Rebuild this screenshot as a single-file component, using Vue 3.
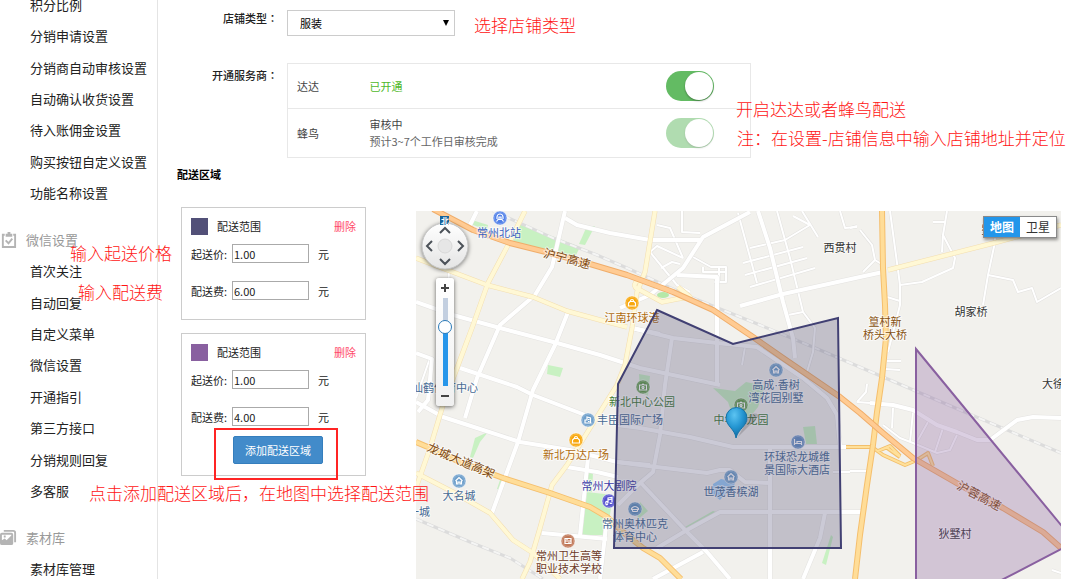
<script setup>
import { ref } from 'vue'

const groups = [
  { title: '', icon: '', items: ['积分比例', '分销申请设置', '分销商自动审核设置', '自动确认收货设置', '待入账佣金设置', '购买按钮自定义设置', '功能名称设置'] },
  { title: '微信设置', icon: 'clip', items: ['首次关注', '自动回复', '自定义菜单', '微信设置', '开通指引', '第三方接口', '分销规则回复', '多客服'] },
  { title: '素材库', icon: 'album', items: ['素材库管理'] }
]

const shopType = ref('服装')
const dada = ref(true)
const fengniao = ref(true)
const zoomLevel = ref(70)
const zones = ref([
  { id: 'a', color: '#525078', start: '1.00', fee: '6.00' },
  { id: 'b', color: '#8960a0', start: '1.00', fee: '4.00' }
])

const notes = [
  { cls: 'n-type', text: '选择店铺类型' },
  { cls: 'n-open', text: '开启达达或者蜂鸟配送' },
  { cls: 'n-tip', text: '注：在设置-店铺信息中输入店铺地址并定位' },
  { cls: 'n-start', text: '输入起送价格' },
  { cls: 'n-fee', text: '输入配送费' },
  { cls: 'n-add', text: '点击添加配送区域后，在地图中选择配送范围' }
]

const greens = [
  '472,220 488,225 487,230 473,225',
  '518,223 580,247 575,257 513,242',
  '587,226 595,226 585,245 579,244',
  '548,365 563,368 560,377 547,374',
  '470,457 475,438 488,432 480,442 473,458',
  '500,480 506,482 501,490 497,489',
  '587,492 613,495 607,535 582,535',
  '588,473 593,473 592,492 587,492',
  '713,388 735,391 746,382 765,386 758,407 750,417 733,417 728,402',
  '803,427 815,426 817,444 806,444',
  '685,527 713,511 716,512 687,528',
  '831,535 833,537 826,565 822,563',
  '640,502 648,511 637,520',
  '639,374 650,376 648,396 640,392'
]

const thin = [
  'M657 225L670 228L683 258', 'M682 211V232L700 233', 'M650 252L663 268L677 285L690 292', 'M650 252L657 246L683 258M661 268L672 262L680 264',
  'M693 257L711 267H726V282H714M703 267V272H726M719 267V282', 'M738 213L757 283', 'M750 248L785 240L810 225L793 216',
  'M743 263L803 247', 'M745 275L807 258', 'M750 287L815 268', 'M802 211L818 237', 'M840 211L845 228L857 227',
  'M777 211L790 258L803 312L815 328L813 352L807 372', 'M788 315L803 312', 'M745 347L742 365',
  'M890 211L900 285V305L888 352', 'M900 285L922 282L953 268L955 258L943 235L947 211', 'M942 252L943 235M933 222H945',
  'M995 230V242L988 275L983 305', 'M988 275L1013 280L1018 292L1032 288L1037 302L1061 288', 'M860 230L872 245L875 260L883 265M863 272L875 260', 'M850 228L857 226',
  'M887 361H901M885 369L900 370M887 297L900 301', 'M857 402L866 392L867 384M857 402L870 403', 'M893 408L892 428', 'M913 412L910 442', 'M883 425L900 438L913 443L937 453L950 450L957 435', 'M928 422L918 440M943 428L935 452',
  'M850 471H867M833 472H850', 'M430 358L416 398', 'M449 270L446 330', 'M1052 570L1061 573'
]

const white = [
  'M565 211L552 267L535 295L500 325L477 378L465 418',
  'M416 302L453 315L500 328L557 343L600 355L640 368L720 385',
  'M568 312L555 345L533 390L518 442L492 513',
  'M416 353L432 359L428 400L418 412', 'M460 368L517 387L533 395L585 415',
  'M416 402L443 417L477 428L520 442L570 450L617 462L650 465',
  'M565 218L577 225L610 233L650 240H700', 'M477 211L470 225',
  'M567 467L597 472L618 477', 'M588 458L580 535', 'M542 533L607 539', 'M607 518L600 579', 'M632 328L660 334',
  'M750 212L703 237L683 268L650 295L620 308', 'M677 275L717 277V385',
  'M632 328L673 338L717 343L757 347L803 378L827 398L837 415L840 447',
  'M672 338L665 385L660 435L653 472L640 483L618 505',
  'M758 211L770 248L783 302L793 338L795 358',
  'M740 306L783 294L860 277L883 272',
  'M617 425L640 428L690 437L733 447H850',
  'M617 462L640 465L707 473L720 470H730L745 482L770 483', 'M770 448V579',
  'M657 548L687 530L720 512H862', 'M640 482L687 532L707 552L730 579', 'M703 552L653 579', 'M825 513L820 538L803 579',
  'M870 403L893 405L913 410L937 425L957 432L977 440H990L1017 420L1033 417L1061 418'
]

const cream = [
  'M416 258L487 285L533 297L567 311L600 320L627 327',
  'M525 211L507 247L488 283L472 328L457 368L443 405L430 448L417 485',
  'M655 211L645 272L637 292L632 328L625 365L617 385L590 428L567 465L552 485L540 528L530 562L522 579',
  'M416 473L453 492L490 513L513 540L533 553L560 579',
  'M888 270L990 244L1061 225',
  'M643 280C634 280 631 288 640 290L662 302L677 299L690 297L678 287'
]

const yellow = [
  'M882 211L883 268L885 305L886 338L882 378L877 412L873 445L867 485L860 535L855 579',
  'M416 442L430 448L460 462L503 478L550 493L590 507L607 517L623 532L643 548L660 558L681 579'
]
const ramps = 'M846 447H872L883 455L905 465L917 460L928 453L933 466M886 447L900 457M878 451L890 446L900 456'
const orange = 'M433 209L473 230L510 243L550 253L590 264L627 275L673 292L713 310L753 337L783 358L840 397L860 413L883 433L913 458L960 485L1003 508L1043 532L1061 548'
const rails = [
  'M493 211L553 238L597 255L627 268L693 298L760 325L820 350L890 380L967 413L1061 453',
  'M416 519L470 542L510 558L543 579'
]

const pois = [
  { x: 500, y: 218, c: '#4f7fe8', k: 'station' },
  { x: 632, y: 303, c: '#f8a70c', k: 'bag' },
  { x: 643, y: 387, c: '#5d9b45', k: 'park' },
  { x: 576, y: 440, c: '#f8a70c', k: 'bag' },
  { x: 588, y: 420, c: '#6e9fcb', k: 'office' },
  { x: 459, y: 481, c: '#6e9fcb', k: 'home' },
  { x: 609, y: 501, c: '#5552cf', k: 'music' },
  { x: 635, y: 509, c: '#6093c0', k: 'gym' },
  { x: 776, y: 370, c: '#6e9fcb', k: 'home' },
  { x: 741, y: 405, c: '#5d9b45', k: 'park' },
  { x: 798, y: 442, c: '#6590c4', k: 'bed' },
  { x: 731, y: 477, c: '#6e9fcb', k: 'home' },
  { x: 568, y: 541, c: '#c07757', k: 'school' }
]
const glyphs = {
  station: 'M-3.500 3.500L-2 1.500H2L3.500 3.500M-3 1V-1A3 3 0 0 1 3 -1V1M-1 1V-1H1V1',
  bag: 'M-3.500 3V0L-2 -1.500H2L3.500 0V3ZM-1.500 -1.500V-2A1.500 1.500 0 0 1 1.500 -2V-1.500',
  park: 'M-3.500 -2H-1L0 -3L1 -2H3.500V3H-3.500ZM-1 .5A1 1 0 1 0 1 .5A1 1 0 1 0 -1 .5',
  office: 'M-3.500 3H3.500M-3 3V0H-1V-3L2.500 -2V3M0 -.5H1.500M0 1.500H1.500',
  home: 'M-3.500 0L0 -3.500L3.500 0M-2.500 0V3H-1V1H1V3H2.500V0',
  music: 'M-1 2V-3L3 -3.500V1M-1 -1L3 -2M-1.500 2A1 1 0 1 1 -3 2A1 1 0 1 1 -1.500 2M3 1.500A1 1 0 1 1 1 1.500',
  gym: 'M-3.500 -.5Q0 -4.500 3.500 -.5V.5H-3.500ZM-2.500 2.500H2.500M-2.500 0V2.500M2.500 0V2.500',
  bed: 'M-3.500 -3V3M-3.500 1.500H3.500V3M3.500 1.500V-.5H-1V1.500',
  school: 'M-3 -2.500H3V2.500H-3ZM-3 0H3M-1 -2.500V-1M1 1V2.500'
}

const labels = [
  { x: 499, y: 233, t: '常州北站', c: '#3a5fc0' },
  { x: 632, y: 318, t: '江南环球港', c: '#b06c10' },
  { x: 642, y: 402, t: '新北中心公园', c: '#3f7a34' },
  { x: 630, y: 420, t: '丰臣国际广场', c: '#466a94' },
  { x: 576, y: 455, t: '新北万达广场', c: '#b06c10' },
  { x: 609, y: 486, t: '常州大剧院', c: '#3d3ba8' },
  { x: 635, y: 524, t: '常州奥林匹克', c: '#466a94' },
  { x: 635, y: 537, t: '体育中心', c: '#466a94' },
  { x: 459, y: 496, t: '大名城', c: '#466a94' },
  { x: 419, y: 512, t: '一城', c: '#466a94' },
  { x: 445, y: 388, t: '仙鹤体育中心', c: '#466a94' },
  { x: 776, y: 385, t: '高成·香树', c: '#466a94' },
  { x: 776, y: 398, t: '湾花园别墅', c: '#466a94' },
  { x: 741, y: 420, t: '中华恐龙园', c: '#3f7a34' },
  { x: 797, y: 457, t: '环球恐龙城维', c: '#466a94' },
  { x: 797, y: 470, t: '景国际大酒店', c: '#466a94' },
  { x: 731, y: 492, t: '世茂香槟湖', c: '#466a94' },
  { x: 569, y: 556, t: '常州卫生高等', c: '#6d3a28' },
  { x: 569, y: 569, t: '职业技术学校', c: '#6d3a28' },
  { x: 840, y: 248, t: '西贯村', c: '#333' },
  { x: 885, y: 322, t: '篁村新', c: '#86500f' },
  { x: 885, y: 335, t: '桥头大桥', c: '#86500f' },
  { x: 971, y: 312, t: '胡家桥', c: '#333' },
  { x: 1053, y: 384, t: '大徐', c: '#333' },
  { x: 987, y: 230, t: '墅', c: '#333' },
  { x: 955, y: 534, t: '狄墅村', c: '#333' },
  { x: 567, y: 259, t: '沪宁高速', c: '#7d4a12', r: 15 },
  { x: 461, y: 461, t: '龙城大道高架', c: '#7d4a12', r: 23 },
  { x: 979, y: 496, t: '沪蓉高速', c: '#7d4a12', r: 28 }
]
</script>

<template>
  <div class="page">
    <nav class="side">
      <ul v-for="g in groups" :key="g.title" class="group">
        <li v-if="g.title" class="head">
          <svg v-if="g.icon === 'clip'" class="ico" viewBox="0 0 18 18" fill="none" stroke="#b4b4b4" stroke-width="2">
            <path d="M5 4H3V17H16V4H14" /><path d="M6 6V3H8V1H11V3H13V6Z" fill="#b4b4b4" stroke="none" /><path d="M6 10L9 13L13 8" />
          </svg>
          <svg v-else class="ico" viewBox="0 0 18 18" fill="#b4b4b4">
            <path d="M4 2H14Q16 2 16 4V14" fill="none" stroke="#b4b4b4" stroke-width="2" />
            <path fill-rule="evenodd" d="M2 4H12Q14 4 14 6V15Q14 17 12 17H2Q0 17 0 15V6Q0 4 2 4ZM2 6V12L5 10L7 12L12 7V6ZM4 7H6V9H4Z" />
          </svg>
          {{ g.title }}
        </li>
        <li v-for="i in g.items" :key="i"><a href="#">{{ i }}</a></li>
      </ul>
    </nav>

    <main class="main">
      <div class="field">
        <label class="lab" for="shop-type">店铺类型<span class="colon">：</span></label>
        <div class="select">
          <select id="shop-type" v-model="shopType"><option>服装</option></select>
          <svg viewBox="0 0 8 8"><path d="M1 1H7L4 7Z" /></svg>
        </div>
      </div>
      <div class="field providers">
        <span id="prov" class="lab">开通服务商<span class="colon">：</span></span>
        <table aria-labelledby="prov">
          <tbody>
            <tr>
              <td class="name"><label for="dada">达达</label></td>
              <td class="ok">已开通</td>
              <td class="sw"><input id="dada" v-model="dada" class="switch" type="checkbox"></td>
            </tr>
            <tr>
              <td class="name"><label for="fengniao">蜂鸟</label></td>
              <td>审核中<p>预计3~7个工作日审核完成</p></td>
              <td class="sw"><input id="fengniao" v-model="fengniao" class="switch" type="checkbox" disabled></td>
            </tr>
          </tbody>
        </table>
      </div>
      <h2>配送区域</h2>
      <div class="zones">
        <div class="cards">
          <section v-for="(z, n) in zones" :key="z.id" class="card">
            <header>
              <span class="swatch" :style="{ background: z.color }"></span>配送范围
              <a href="#" class="del">删除</a>
            </header>
            <div class="row"><label :for="'s' + z.id">起送价:</label><input :id="'s' + z.id" v-model="z.start" type="text">元</div>
            <div class="row fee"><label :for="'f' + z.id">配送费:</label><input :id="'f' + z.id" v-model="z.fee" type="text">元</div>
            <button v-if="n === zones.length - 1" class="add" type="button">添加配送区域<span class="frame"></span></button>
          </section>
        </div>

        <div class="map">
          <svg class="canvas" viewBox="416 211 645 368" preserveAspectRatio="xMinYMin slice">
            <defs>
              <radialGradient id="pin" cx="40%" cy="25%" r="80%"><stop offset="0" stop-color="#5cc4f2" /><stop offset=".5" stop-color="#2596d2" /><stop offset="1" stop-color="#0b6499" /></radialGradient>
              <linearGradient id="dial" x1="0" y1="0" x2="0" y2="1"><stop offset="0" stop-color="#fff" /><stop offset="1" stop-color="#e4e4e4" /></linearGradient>
            </defs>
            <rect x="416" y="211" width="1600" height="900" fill="#f2f1ed" />
            <polygon v-for="g in greens" :key="g" :points="g" fill="#c8f1c2" />
            <path d="M713 484L721 479L735 482L733 491L724 495L720 500L712 494Z" fill="#9accf8" />
            <g fill="none" stroke-linejoin="round">
              <g v-for="r in rails" :key="r"><path :d="r" stroke="#dcdcdc" stroke-width="3" /><path :d="r" stroke="#f5f5f4" stroke-width="2" stroke-dasharray="7 5" /></g>
              <path v-for="r in thin" :key="r" :d="r" stroke="#e2e1df" stroke-width="3" />
              <path v-for="r in thin" :key="r + 'i'" :d="r" stroke="#fff" stroke-width="2" />
              <path v-for="r in white" :key="r" :d="r" stroke="#e4e3e1" stroke-width="5" />
              <path v-for="r in white" :key="r + 'i'" :d="r" stroke="#fff" stroke-width="4" />
              <path v-for="r in cream" :key="r" :d="r" stroke="#f3deb0" stroke-width="5" />
              <path v-for="r in cream" :key="r + 'i'" :d="r" stroke="#fff8d5" stroke-width="4" />
              <path :d="ramps" stroke="#f2bf6c" stroke-width="4" /><path :d="ramps" stroke="#ffe09a" stroke-width="2" />
              <path v-for="r in yellow" :key="r" :d="r" stroke="#f5bf6d" stroke-width="6" />
              <path v-for="r in yellow" :key="r + 'i'" :d="r" stroke="#ffdd98" stroke-width="4" />
              <path :d="orange" stroke="#f0ad6a" stroke-width="6" /><path :d="orange" stroke="#ffcb93" stroke-width="4" />
            </g>
            <ellipse cx="663" cy="295" rx="6" ry="3" fill="#b5e8a8" />
            <g v-for="p in pois" :key="p.x + '-' + p.y" :transform="`translate(${p.x} ${p.y})`">
              <circle r="7" :fill="p.c" stroke="#fff" stroke-width=".6" /><circle r="5.600" fill="none" stroke="#fff" stroke-opacity=".35" stroke-width=".6" />
              <path :d="glyphs[p.k]" fill="none" stroke="#fff" stroke-width="1.200" />
            </g>
            <text v-for="l in labels" :key="l.t + l.y" :x="l.x" :y="l.y + 4" :fill="l.c" :transform="l.r ? `rotate(${l.r} ${l.x} ${l.y})` : null" :class="{ road: l.r }">{{ l.t }}</text>
            <polygon points="657,310 733,344 838,318 841,548 614,548 618,384" fill="#525078" fill-opacity=".3" stroke="#414073" stroke-width="2" />
            <polygon points="916,349 1075,542 990,586 916,586" fill="#8960a0" fill-opacity=".3" stroke="#8960a0" stroke-width="2" />
            <path d="M738 437L758 417Q760 412 750 414Z" fill="#333" opacity=".2" />
            <path d="M736 438C735 429 726 426 726 418A10 10 0 0 1 747 418C747 426 738 429 736 438Z" fill="url(#pin)" stroke="#1673a8" />
            <circle class="dial" cx="445" cy="246" r="23" fill="url(#dial)" stroke="#c6c6c6" />
            <circle cx="445" cy="246" r="7" fill="#e6e6e6" stroke="#d8d8d8" />
            <path d="M440 233L445 228L450 233M440 259L445 264L450 259M432 241L427 246L432 251M458 241L463 246L458 251" fill="none" stroke="#4c5259" stroke-width="2" />
            <rect x="440" y="216" width="9" height="9" fill="#19649c" />
            <text x="445" y="224" class="north">北</text>
          </svg>
          <div class="zoom">
            <button type="button" aria-label="放大"><svg viewBox="0 0 8 8"><path d="M0 4H8M4 0V8" /></svg></button>
            <input v-model="zoomLevel" type="range" min="0" max="100" aria-label="缩放">
            <button type="button" aria-label="缩小"><svg viewBox="0 0 8 8"><path d="M0 4H8" /></svg></button>
          </div>
          <div class="layers"><button type="button" class="on">地图</button><button type="button">卫星</button></div>
        </div>
      </div>
    </main>
    <p v-for="n in notes" :key="n.cls" class="note" :class="n.cls">{{ n.text }}</p>
  </div>
</template>

<style>
body { margin: 0; background: #fff; }
</style>

<style scoped>
.page { position: relative; display: flex; height: 100vh; overflow: hidden; font: 11px/18px "Noto Sans CJK SC", sans-serif; color: #222; }
.page * { box-sizing: border-box; }
a { color: inherit; text-decoration: none; }
p { margin: 0; }
input, select, button { font: inherit; color: inherit; margin: 0; }
.side { flex: 0 0 158px; margin-top: -11px; border-right: 1px solid #e4e4e4; font-size: 13px; }
.group { display: grid; grid-auto-rows: 1fr; align-items: center; height: 220px; margin: 0 0 15px; padding: 0 0 0 30px; list-style: none; white-space: nowrap; }
.group:nth-child(2) { height: 283px; }
.group:nth-child(3) { height: 63px; }
.head { display: flex; align-items: center; gap: 9px; margin-left: -30px; color: #999; }
.ico { width: 17px; height: 17px; }
.main { flex: 1; min-width: 0; display: flex; flex-direction: column; padding: 10px 19px 0; }
.field { display: flex; align-items: flex-start; gap: 9px; }
.lab { flex: 0 0 101px; text-align: right; font-weight: 500; line-height: 16px; }
.colon { font-family: "Noto Sans CJK JP", sans-serif; }
.providers { margin-top: 27px; }
.providers .lab { padding-top: 4px; }
.select { position: relative; width: 168px; }
.select select { display: block; width: 100%; height: 26px; padding: 0 12px; border: 1px solid #ccc; border-radius: 0; background: #fff; appearance: none; color: #000; }
.select svg { position: absolute; right: 5px; top: 9px; width: 8px; height: 8px; pointer-events: none; }
table { flex: 0 1 464px; border-collapse: collapse; border: 1px solid #e8e8e8; table-layout: fixed; color: #444; line-height: 17px; }
td { height: 45px; padding: 0; }
tr + tr td { height: 49px; border-top: 1px solid #e8e8e8; }
.name { width: 82px; padding-left: 9px; }
td p { color: #666; }
.ok { color: #4fb82c; }
.sw { width: 85px; }
.switch { display: block; appearance: none; width: 48px; height: 30px; border-radius: 15px; background: #63bb63; }
.switch::before { content: ""; display: block; width: 28px; height: 28px; margin: 1px 0 0 19px; border-radius: 50%; background: #fff; box-shadow: 0 1px 2px rgba(0, 0, 0, .35); }
.switch:disabled { opacity: .5; }
h2 { margin: 7px 0 24px; font-size: 11px; line-height: 18px; font-weight: 700; color: #000; }
.zones { flex: 1; min-height: 0; display: flex; gap: 50px; padding-left: 4px; }
.cards { flex: 0 0 185px; display: flex; flex-direction: column; gap: 13px; }
.card { padding: 9px 9px 19px; border: 1px solid #ccc; }
.card:last-child { padding-bottom: 11px; }
.card header { display: flex; align-items: center; height: 18px; margin-bottom: 9px; }
.swatch { width: 17px; height: 17px; margin-right: 9px; }
.del { margin-left: auto; color: #ff4a68; }
.row { display: flex; align-items: center; height: 19px; }
.row label { flex: 0 0 41px; }
.row input { width: 77px; height: 19px; margin-right: 9px; padding: 0 1px; border: 1px solid #aaa; background: #fff; }
.fee { margin-top: 18px; }
.add { position: relative; display: block; width: 90px; height: 28px; margin: 10px 0 0 42px; padding: 0; border: 1px solid #357ebd; border-radius: 2px; background: #428bca; color: #fff; }
.frame { position: absolute; inset: -9px -16px -17px -20px; border: 2px solid #ff2424; }
.map { position: relative; flex: 1; min-width: 0; margin-top: 4px; overflow: hidden; }
.canvas { display: block; width: 100%; height: 100%; }
.canvas text { font-family: "Liberation Sans", "Noto Sans CJK SC", sans-serif; font-size: 11px; text-anchor: middle; paint-order: stroke; stroke: rgba(255, 255, 255, .6); stroke-width: 2px; }
.canvas .road { font-size: 12px; }
.canvas .north { font-size: 8px; font-weight: 700; fill: #fff; stroke: none; }
.dial { filter: drop-shadow(0 1px 2px rgba(0, 0, 0, .5)); }
.zoom { position: absolute; left: 20px; top: 67px; width: 18px; height: 128px; display: flex; flex-direction: column; align-items: center; border-radius: 3px; background: linear-gradient(#fff, #f0f0f0); box-shadow: 0 1px 4px rgba(0, 0, 0, .6); }
.zoom button { flex: 1; padding: 0; border: 0; background: none; }
.zoom svg { display: block; width: 8px; height: 8px; stroke: #444; stroke-width: 2; }
.zoom input { writing-mode: vertical-lr; direction: rtl; appearance: none; width: 14px; height: 88px; background: linear-gradient(#c3cfe0 30%, #2796ea 30%) center / 5px 100% no-repeat; }
.zoom input::-webkit-slider-thumb { appearance: none; width: 14px; height: 14px; border: 1px solid #2a7ab8; border-radius: 50%; background: #fff; }
.layers { position: absolute; right: 4px; top: 5px; display: flex; border: 1px solid #8a8a8a; box-shadow: 1px 2px 3px rgba(0, 0, 0, .4); }
.layers button { width: 36px; height: 20px; padding: 0; border: 0; background: #fff; font-size: 12px; line-height: 18px; color: #333; }
.layers .on { width: 36px; background: #2396ea; color: #fff; font-weight: 700; }
.note { position: absolute; font-size: 17px; line-height: 24px; font-weight: 300; color: #ff1414; white-space: nowrap; }
.n-type { left: 474px; top: 13px; }
.n-open { left: 736px; top: 97px; }
.n-tip { left: 737px; top: 126px; }
.n-start { left: 70px; top: 241px; }
.n-fee { left: 78px; top: 280px; }
.n-add { left: 89px; top: 481px; }
</style>
